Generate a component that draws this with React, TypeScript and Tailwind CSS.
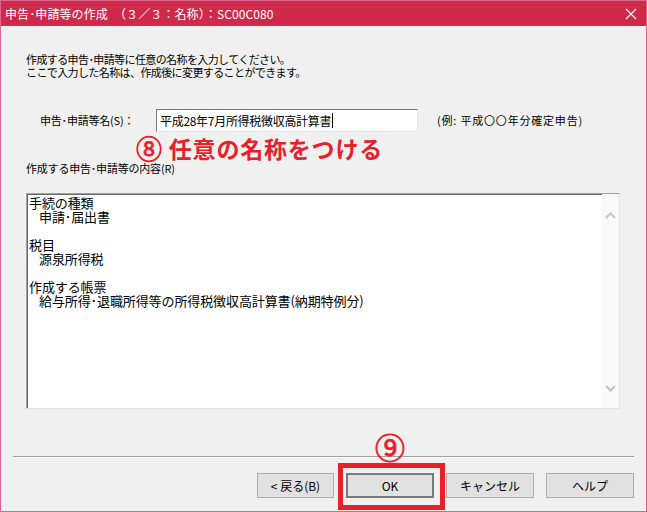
import React from "react";

const F = { fontFamily: '"Noto Sans CJK JP", "Noto Sans", sans-serif' };

function Btn({ label, w, def }: { label: string; w: string; def?: boolean }) {
  return (
    <div
      className={`${w} h-[25px] flex items-center justify-center bg-[#e1e1e1] text-[12px] text-black ${
        def ? "border-2 border-[#7a7a7a]" : "border border-[#adadad]"
      }`}
    >
      {label}
    </div>
  );
}

export default function App() {
  return (
    <div
      className="w-[647px] h-[512px] border border-[#e0668f] bg-[#f0f0f0] flex flex-col relative overflow-hidden"
      style={F}
    >
      {/* title bar */}
      <div className="h-[25px] bg-[#cf2a49] flex items-center justify-between text-white shrink-0">
        <span className="pl-[4px] text-[12px] tracking-[0.1px] leading-none">
          申告･申請等の作成　（３／３：名称）：SC00C080
        </span>
        <svg width="12" height="12" viewBox="0 0 12 12" className="mr-[9px]">
          <path d="M1 1 L11 11 M11 1 L1 11" stroke="#fff" strokeWidth="1.1" />
        </svg>
      </div>

      <div className="flex flex-col pl-[25px] flex-1">
        <div className="mt-[27px] text-[11px] leading-[13px] tracking-[-0.6px] text-black">
          <div>作成する申告･申請等に任意の名称を入力してください。</div>
          <div>ここで入力した名称は、作成後に変更することができます。</div>
        </div>

        <div className="mt-[30px] flex items-center h-[23px]">
          <div className="ml-[14px] w-[116px] text-[11px] tracking-[-0.2px] text-black">
            申告･申請等名(S)：
          </div>
          <div className="w-[262px] h-[23px] bg-white border border-t-[#7a7a7a] border-l-[#7a7a7a] border-r-[#e3e3e3] border-b-[#e3e3e3] flex items-center pl-[3px] text-[12px] tracking-[-0.3px] text-black">
            <span>平成28年7月所得税徴収高計算書</span>
            <span className="inline-block w-[1px] h-[15px] bg-black ml-[1px]" />
          </div>
          <div className="ml-[19px] text-[11px] tracking-[0.8px] text-black">(例: 平成〇〇年分確定申告)</div>
        </div>

        <div className="mt-[29px] text-[11px] leading-[14px] tracking-[-0.2px] text-black">
          作成する申告･申請等の内容(R)
        </div>

        <div className="mt-[18px] w-[594px] h-[216px] bg-white border border-t-[#a0a0a0] border-l-[#a0a0a0] border-r-[#e3e3e3] border-b-[#e3e3e3] shadow-[inset_1px_1px_0_#696969] flex">
          <div className="flex-1 pl-[2px] pt-[2px] text-[13px] leading-[14px] text-black tracking-[-0.1px]">
            <div>手続の種類</div>
            <div className="pl-[10px]">申請･届出書</div>
            <div className="h-[14px]" />
            <div>税目</div>
            <div className="pl-[10px]">源泉所得税</div>
            <div className="h-[14px]" />
            <div>作成する帳票</div>
            <div className="pl-[10px]">給与所得･退職所得等の所得税徴収高計算書(納期特例分)</div>
          </div>
          <div className="w-[17px] bg-[#f9f9f9] flex flex-col items-center justify-between pt-[18px] pb-[16px]">
            <svg width="11" height="7" viewBox="0 0 11 7">
              <path d="M1 6 L5.5 1.5 L10 6" stroke="#c2c2c2" strokeWidth="2" fill="none" />
            </svg>
            <svg width="11" height="7" viewBox="0 0 11 7">
              <path d="M1 1 L5.5 5.5 L10 1" stroke="#c2c2c2" strokeWidth="2" fill="none" />
            </svg>
          </div>
        </div>

        <div className="mt-[47px] ml-[-13px] w-[621px] h-[2px] border-t border-t-[#a0a0a0] border-b border-b-white" />

        <div className="mt-[15px] flex pr-[12px] justify-end gap-[12px]">
          <Btn label="< 戻る(B)" w="w-[77px]" />
          <Btn label="OK" w="w-[88px]" def />
          <Btn label="キャンセル" w="w-[88px]" />
          <Btn label="ヘルプ" w="w-[88px]" />
        </div>
      </div>

      {/* annotations */}
      <div className="absolute left-[135px] top-[133px] text-[23px] font-bold text-[#e8202a] leading-[28px] tracking-[0.8px] flex items-center">
        <span className="text-[26px] font-normal [-webkit-text-stroke:0.8px_#e8202a]">⑧</span>
        <span className="ml-[6px]">任意の名称をつける</span>
      </div>
      <div className="absolute left-[374px] top-[430px] text-[30px] text-[#e8202a] leading-[30px] [-webkit-text-stroke:0.8px_#e8202a]">
        ⑨
      </div>
      <div className="absolute left-[337px] top-[462px] w-[107px] h-[47px] border-[5px] border-[#e8202a]" />
    </div>
  );
}
